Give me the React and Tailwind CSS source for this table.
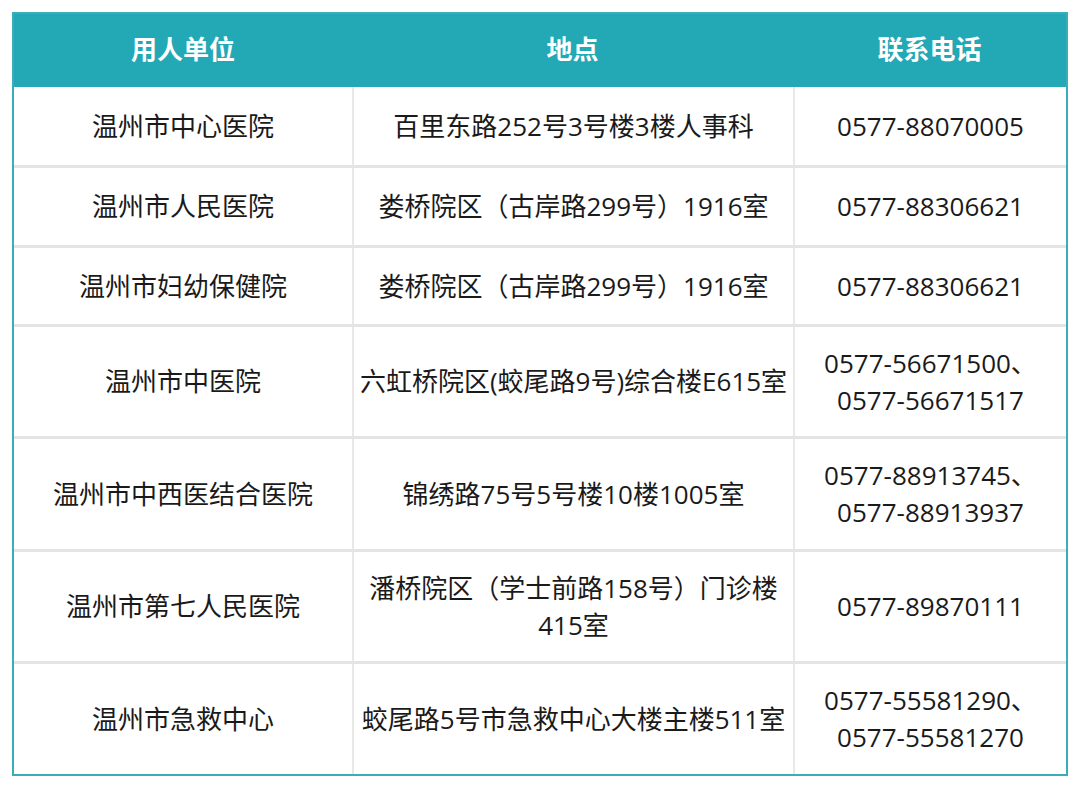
import React from "react";

const rows = [
  { h: "h-[78px]", a: "温州市中心医院", b: ["百里东路252号3号楼3楼人事科"], c: ["0577-88070005"] },
  { h: "h-[80px]", a: "温州市人民医院", b: ["娄桥院区（古岸路299号）1916室"], c: ["0577-88306621"] },
  { h: "h-[79px]", a: "温州市妇幼保健院", b: ["娄桥院区（古岸路299号）1916室"], c: ["0577-88306621"] },
  { h: "h-[112px]", a: "温州市中医院", b: ["六虹桥院区(蛟尾路9号)综合楼E615室"], c: ["0577-56671500、", "0577-56671517"] },
  { h: "h-[113px]", a: "温州市中西医结合医院", b: ["锦绣路75号5号楼10楼1005室"], c: ["0577-88913745、", "0577-88913937"] },
  { h: "h-[112px]", a: "温州市第七人民医院", b: ["潘桥院区（学士前路158号）门诊楼", "415室"], c: ["0577-89870111"] },
  { h: "h-[113px]", a: "温州市急救中心", b: ["蛟尾路5号市急救中心大楼主楼511室"], c: ["0577-55581290、", "0577-55581270"] },
];

function Lines({ items }) {
  return (
    <div className="text-center leading-[37px]">
      {items.map((t, i) => (
        <div key={i}>{t}</div>
      ))}
    </div>
  );
}

export default function App() {
  return (
    <div className="w-[1080px] h-[788px] bg-white pt-[12px] pl-[12px]" style={{ fontFamily: '"Open Sans", "Noto Sans CJK SC", sans-serif' }}>
      <div className="w-[1056px] border-2 border-[#3aadb8] text-[26px] text-[#1a1a1a]">
        <div className="grid grid-cols-[338px_441px_1fr] h-[73px] bg-[#23a8b5] text-white font-bold">
          <div className="flex items-center justify-center pb-[3px]">用人单位</div>
          <div className="flex items-center justify-center pb-[3px]">地点</div>
          <div className="flex items-center justify-center pb-[3px]">联系电话</div>
        </div>
        {rows.map((r, i) => (
          <div key={i} className={`grid grid-cols-[338px_441px_1fr] ${r.h} ${i === 0 ? "" : "border-t-[3px] border-[#e4e4e4]"}`}>
            <div className="flex items-center justify-center">{r.a}</div>
            <div className="flex items-center justify-center border-l-2 border-[#e8e8e8]">
              <Lines items={r.b} />
            </div>
            <div className="flex items-center justify-center border-l-2 border-[#e8e8e8]">
              <Lines items={r.c} />
            </div>
          </div>
        ))}
      </div>
    </div>
  );
}
